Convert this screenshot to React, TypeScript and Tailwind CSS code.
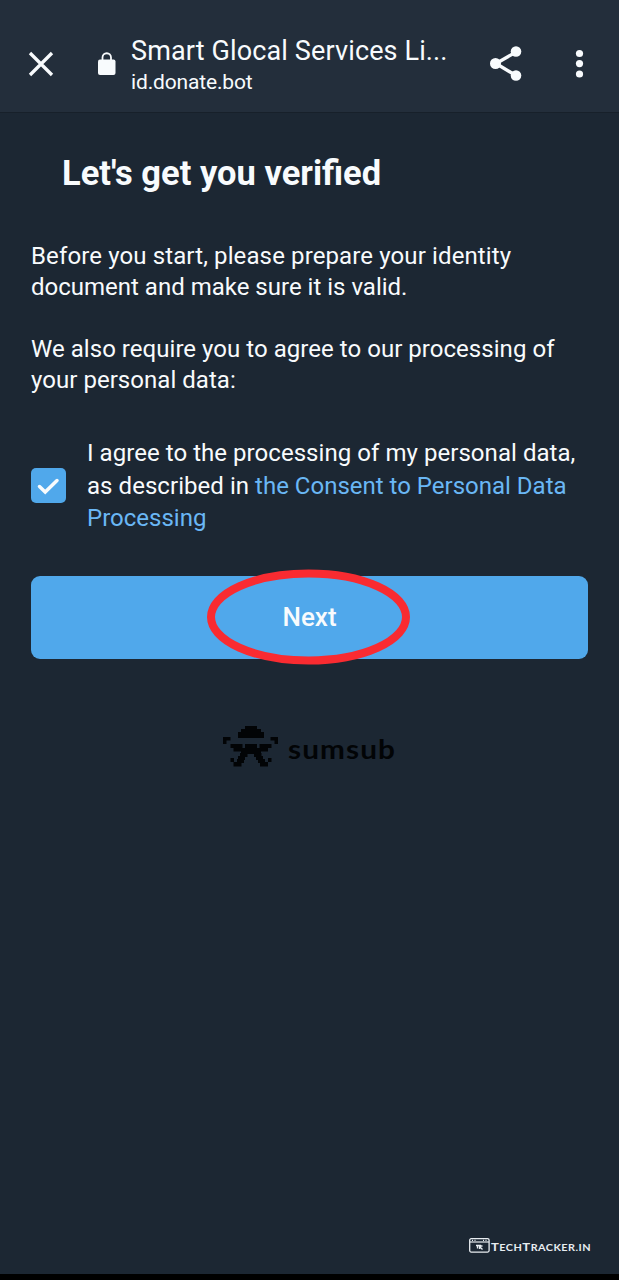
const ROWS: [number, number, number, number][] = [
  [22, 0, 12, 4], [18, 3, 20, 4], [15, 6, 26, 6],
  [0, 11, 7.500, 3.500], [0, 14, 3.500, 4], [47.500, 11, 7.500, 3.500], [51.500, 14, 3.500, 4],
  [7.500, 18, 12, 4], [22, 18, 12, 7], [36.500, 18, 12, 4],
  [10.500, 21, 8, 4.500], [18, 22, 19, 2.500], [37, 21, 8, 4.500],
  [18, 24, 20, 4], [17, 27, 7.500, 4], [31, 27, 7.500, 4],
  [15, 30, 7, 4], [33, 30, 7, 4],
  [7.500, 32, 3.500, 4], [14, 33, 7, 4], [35, 33, 7, 4], [45, 32, 3.500, 4],
  [10.500, 36, 8, 4.500], [37, 36, 8, 4.500],
];

function SumsubIcon() {
  return (
    <svg width="56" height="41" viewBox="0 0 56 41" fill="#020406">
      {ROWS.map(([x, y, w, h], i) => (
        <rect key={i} x={x} y={y} width={w} height={h} />
      ))}
    </svg>
  );
}

function App() {
  return (
    <div className="flex h-[1280px] w-full flex-col bg-[#1c2733] font-['Roboto',sans-serif] text-[#f8fbfd]">
      <header className="flex h-[113px] shrink-0 items-start border-b border-[#17202a] bg-[#232e3b]">
        <svg className="mt-[51px] ml-[28px] shrink-0" width="26" height="26" viewBox="0 0 26 26" fill="none" stroke="currentColor" strokeWidth="3.300">
          <path d="M2 2L24 24M24 2L2 24" />
        </svg>
        <svg className="mt-[52px] ml-[43px] shrink-0" width="19" height="24" viewBox="0 0 19 24" fill="currentColor">
          <rect x="1" y="7.500" width="17.500" height="15.500" rx="2" />
          <path d="M5.500 9V5.500a4.250 4.250 0 0 1 8.500 0V9" fill="none" stroke="currentColor" strokeWidth="1.800" />
        </svg>
        <div className="mt-[34px] ml-[15px] w-[330px] shrink-0">
          <div className="text-[27px] leading-[34px] tracking-[0.130px] whitespace-nowrap">Smart Glocal Services Li...</div>
          <div className="text-[21px] leading-[29px] tracking-[-0.150px]">id.donate.bot</div>
        </div>
        <svg className="mt-[45px] ml-[29px] shrink-0" width="33" height="37" viewBox="0 0 33 37" fill="currentColor">
          <path d="M26 7L6 18.500L26 30.500" fill="none" stroke="currentColor" strokeWidth="3.400" />
          <circle cx="26" cy="6.500" r="5.300" />
          <circle cx="5.500" cy="18.500" r="5.500" />
          <circle cx="26" cy="30.500" r="5.300" />
        </svg>
        <svg className="mt-[49px] ml-[52px] shrink-0" width="9" height="30" viewBox="0 0 9 30" fill="currentColor">
          <circle cx="4.500" cy="4.500" r="3.600" />
          <circle cx="4.500" cy="14.600" r="3.600" />
          <circle cx="4.500" cy="25" r="3.600" />
        </svg>
      </header>

      <main className="flex flex-1 flex-col px-[31px]">
        <h1 className="mt-[39px] ml-[31px] text-[34.500px] leading-[42px] font-bold whitespace-nowrap">Let's get you verified</h1>
        <p className="mt-[47px] text-[24px] leading-[31px] tracking-[0.120px] whitespace-nowrap">
          Before you start, please prepare your identity<br /><span className="tracking-[0px]">document and make sure it is valid.</span>
        </p>
        <p className="mt-[31px] text-[24px] leading-[31px] tracking-[0.040px] whitespace-nowrap">
          We also require you to agree to our processing of<br />your personal data:
        </p>
        <label className="mt-[41px] flex items-center">
          <span className="flex size-[35px] shrink-0 items-center justify-center rounded-[5px] bg-[#50a8eb]">
            <svg width="35" height="35" viewBox="0 0 35 35" fill="none" stroke="currentColor" strokeWidth="3.500" strokeLinecap="round">
              <path d="M8.500 18.500L14.200 24L26 12.500" />
            </svg>
          </span>
          <span className="ml-[21px] text-[24px] leading-[32.500px] tracking-[0.050px] whitespace-nowrap">
            I agree to the processing of my personal data,<br />as described in <a className="tracking-[0px] text-[#6ab7f5]">the Consent to Personal Data<br />Processing</a>
          </span>
        </label>
        <button className="relative mt-[41.500px] h-[82.500px] w-[557px] shrink-0 rounded-[9px] bg-[#50a8eb] text-[26px] font-medium">
          Next
          <svg className="absolute top-[-7px] left-[175px]" width="205" height="96" viewBox="0 0 205 96" fill="none" stroke="#f92b31">
            <ellipse cx="102.500" cy="48" rx="97.500" ry="43.500" strokeWidth="8" />
          </svg>
        </button>
        <div className="mt-[67px] ml-[192px] flex items-start text-[#020406]">
          <SumsubIcon />
          <svg className="ml-[8px]" width="112" height="41" viewBox="0 0 112 41" fill="currentColor">
            <text x="1" y="32.500" textLength="108" lengthAdjust="spacingAndGlyphs" letterSpacing="1" fontSize="27" fontWeight="700" fontFamily="Lato, sans-serif">sumsub</text>
          </svg>
        </div>
      </main>

      <footer className="flex h-[36px] shrink-0 items-start pl-[469px] text-[#e8edf1]">
        <svg className="shrink-0" width="21" height="15" viewBox="0 0 21 15" fill="none" stroke="currentColor">
          <rect x="0.700" y="0.700" width="19.400" height="13.400" rx="1.500" strokeWidth="1.300" />
          <path d="M1 4H20" strokeWidth="1.200" />
          <path d="M3 2.400h1M5.500 2.400h1M14 2.400h1M16.500 2.400h1" strokeWidth="1.100" />
          <path d="M7 7.500h5M8.500 7.500v3M10 8l3.500 3.500M10.500 11V8h3" strokeWidth="1.300" />
        </svg>
        <svg width="104" height="18" viewBox="0 0 104 18" fill="currentColor">
          <text x="1" y="13" textLength="100" lengthAdjust="spacingAndGlyphs" letterSpacing="0.400" fontFamily="Lato, sans-serif" fontWeight="700" fontSize="11.500">T<tspan fontSize="9.500">ECH</tspan>T<tspan fontSize="9.500">RACKER.IN</tspan></text>
        </svg>
      </footer>
      <div className="h-[6px] shrink-0 bg-black" />
    </div>
  );
}

export default App;
